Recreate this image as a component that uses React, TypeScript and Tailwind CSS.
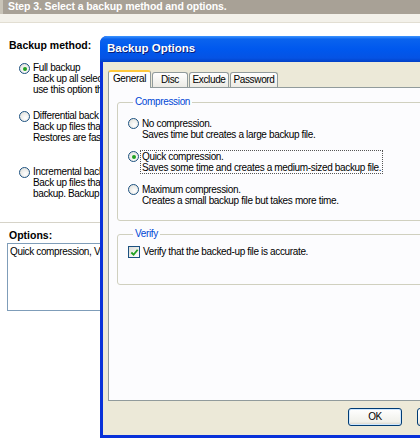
import React from 'react';

const Radio = ({ checked = false }: { checked?: boolean }) => (
  <span className="flex h-[11px] w-[11px] shrink-0 items-center justify-center rounded-full border border-[#1c5180] bg-[radial-gradient(circle_at_60%_65%,#ffffff,#dcdcd6)]">
    {checked && <span className="h-[4px] w-[4px] rounded-full bg-[#21a121]" />}
  </span>
);

const Checkbox = () => (
  <span className="flex h-[12px] w-[12px] shrink-0 items-center justify-center border border-[#1c5180] bg-[linear-gradient(135deg,#dcdcd6,#ffffff)]">
    <svg viewBox="0 0 10 10" className="h-[9px] w-[9px]">
      <path d="M1.5 5 L4 7.5 L8.5 2" fill="none" stroke="#21a121" strokeWidth="2" />
    </svg>
  </span>
);

const MethodOption = ({ label, lines, checked }: { label: string; lines: string[]; checked?: boolean }) => (
  <div className="flex items-start gap-[3px] pl-[19px]">
    <div className="pt-[1px]">
      <Radio checked={checked} />
    </div>
    <div className="leading-[11px]">
      <div>{label}</div>
      {lines.map((l) => (
        <div key={l}>{l}</div>
      ))}
    </div>
  </div>
);

const CompressionOption = ({ title, desc, checked }: { title: string; desc: string; checked?: boolean }) => (
  <div className="flex items-start gap-[1px]">
    <div className="pt-[1px]">
      <Radio checked={checked} />
    </div>
    <div
      className={
        checked
          ? 'border border-dotted border-[#555] px-[1px] leading-[11px]'
          : 'border border-transparent px-[1px] leading-[11px]'
      }
    >
      <div>{title}</div>
      <div>{desc}</div>
    </div>
  </div>
);

const Tab = ({ label, active, width }: { label: string; active?: boolean; width: string }) =>
  active ? (
    <div className={`relative z-10 -mb-[1px] rounded-t-[3px] border-x border-t-2 border-x-[#919b9c] border-t-[#ffc83c] bg-[#fcfcfe] pb-[3px] pt-[1px] text-center leading-[12px] ${width}`}>
      {label}
    </div>
  ) : (
    <div className={`mt-[2px] rounded-t-[3px] border-x border-t border-[#919b9c] bg-[linear-gradient(#ffffff,#ecebe5)] pb-[1px] pt-[1px] text-center leading-[12px] ${width}`}>
      {label}
    </div>
  );

export default function App() {
  return (
    <div className="relative h-[438px] w-[420px] overflow-hidden bg-white font-['Liberation_Sans',Arial,sans-serif] text-[10px] tracking-[-0.35px] text-black">
      {/* wizard page behind */}
      <div className="flex h-[14px] items-center border-l-[3px] border-[#c9c4b8] bg-[#a8a196] pl-[5px] text-[10.5px] font-bold tracking-[-0.1px] text-white">
        Step 3. Select a backup method and options.
      </div>
      <div className="h-[9px] border-b border-[#e2ded2] bg-[#f3f1ea]" />

      <div className="w-[101px] overflow-hidden whitespace-nowrap">
        <div className="pl-[9px] pt-[16px] text-[10.5px] font-bold leading-[12px] tracking-[0px]">Backup method:</div>

        <div className="mt-[11px] flex flex-col">
          <MethodOption checked label="Full backup" lines={['Back up all selec', 'use this option th']} />
          <div className="h-[15px]" />
          <MethodOption label="Differential back" lines={['Back up files tha', 'Restores are fas']} />
          <div className="h-[23px]" />
          <MethodOption label="Incremental back" lines={['Back up files tha', 'backup. Backup']} />
        </div>

        <div className="mt-[23px] h-px bg-[#d6d3c8]" />

        <div className="pl-[9px] pt-[6px] text-[10.5px] font-bold leading-[12px] tracking-[0px]">Options:</div>
        <div className="ml-[7px] mt-[2px] h-[68px] w-[140px] border border-[#7f9db9] px-[2px] pt-[2px] leading-[12px]">
          Quick compression, Ve
        </div>
      </div>

      {/* Backup Options dialog */}
      <div className="absolute left-[100px] top-[36px] flex h-[402px] w-[340px] flex-col overflow-hidden rounded-t-[7px] bg-[#0831d9]">
        <div className="flex h-[26px] shrink-0 items-center bg-[linear-gradient(#3d95ff_0%,#0a63ee_12%,#0058ee_50%,#0553e4_85%,#0340c6_100%)] pl-[7px] text-[11.5px] font-bold tracking-[0px] text-white [text-shadow:1px_1px_0_#0a1e78]">
          Backup Options
        </div>
        <div className="mx-[3px] mb-[3px] flex flex-1 flex-col bg-[#ece9d8] px-[5px] pt-[8px]">
          <div className="flex items-end gap-[1px]">
            <Tab active label="General" width="w-[43px]" />
            <Tab label="Disc" width="w-[36px]" />
            <Tab label="Exclude" width="w-[40px]" />
            <Tab label="Password" width="w-[48px]" />
          </div>
          <div className="h-[314px] border border-[#919b9c] bg-[#fcfcfe] px-[8px] pt-[9px]">
            <fieldset className="h-[124px] rounded-[3px] border border-[#d0d0bf] px-[10px] pt-[10px]">
              <legend className="ml-[5px] px-[2px] text-[10px] leading-[10px] text-[#0046d5]">Compression</legend>
              <div className="flex flex-col gap-[9px]">
                <CompressionOption title="No compression." desc="Saves time but creates a large backup file." />
                <CompressionOption checked title="Quick compression." desc="Saves some time and creates a medium-sized backup file." />
                <CompressionOption title="Maximum compression." desc="Creates a small backup file but takes more time." />
              </div>
            </fieldset>
            <fieldset className="mt-[8px] h-[56px] rounded-[3px] border border-[#d0d0bf] px-[10px] pt-[7px]">
              <legend className="ml-[5px] px-[2px] text-[10px] leading-[10px] text-[#0046d5]">Verify</legend>
              <div className="flex items-center gap-[3px]">
                <Checkbox />
                <span className="leading-[12px]">Verify that the backed-up file is accurate.</span>
              </div>
            </fieldset>
          </div>
          <div className="flex gap-[15px] pl-[240px] pt-[7px]">
            <button className="h-[18px] w-[54px] shrink-0 rounded-[3px] border border-[#003c74] bg-[linear-gradient(#ffffff,#f0f0ea_80%,#d6d0c5)] text-[10px] leading-[16px] shadow-[inset_0_0_0_1px_#cee7ff]">
              OK
            </button>
            <button className="h-[18px] w-[54px] shrink-0 rounded-[3px] border border-[#003c74] bg-[linear-gradient(#ffffff,#f0f0ea_80%,#d6d0c5)] text-[10px] leading-[16px]">
              Cancel
            </button>
          </div>
        </div>
      </div>
    </div>
  );
}
